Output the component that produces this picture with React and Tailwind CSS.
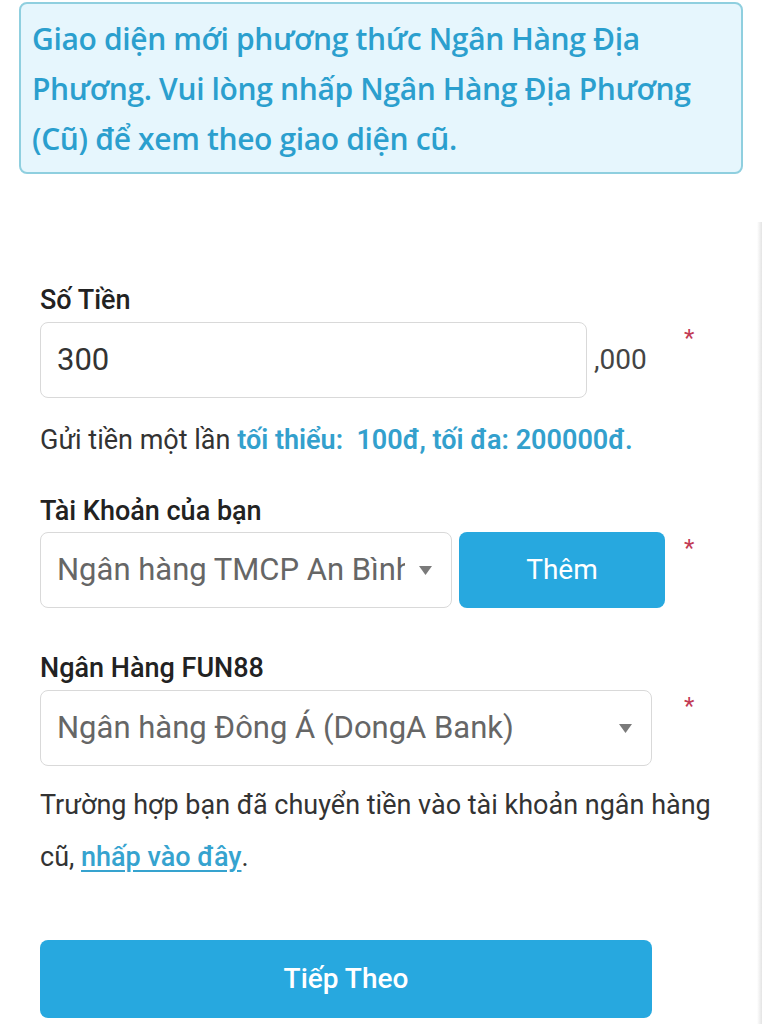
const roboto = { fontFamily: 'Roboto, "Noto Sans", sans-serif' }

function Caret() {
  return (
    <svg width="13" height="9" viewBox="0 0 13 9" className="shrink-0">
      <path d="M0 0 L13 0 L6.5 9 Z" fill="#7a7a7a" />
    </svg>
  )
}

function Star() {
  return <span className="mt-[4px] text-[24px] leading-none text-[#c23a55]">*</span>
}

export default function App() {
  return (
    <div className="relative w-[762px] h-[1024px] overflow-hidden bg-white" style={roboto}>
      {/* right edge shadow */}
      <div className="absolute right-0 top-[222px] h-[802px] w-[5px] bg-gradient-to-r from-white to-[#e4e4e4]" />

      {/* Notice */}
      <div className="mx-[19px] mt-[2px] h-[172px] rounded-[8px] border-2 border-[#8fcfdf] bg-[#e6f6fd] px-[11px] pt-[10px]">
        <p
          className="text-[30px] font-semibold leading-[50px] tracking-[-0.35px] text-[#2b9fce] whitespace-nowrap"
          style={{ fontFamily: '"Open Sans", "Noto Sans", sans-serif' }}
        >
          Giao diện mới phương thức Ngân Hàng Địa
          <br />
          Phương. Vui lòng nhấp Ngân Hàng Địa Phương
          <br />
          (Cũ) để xem theo giao diện cũ.
        </p>
      </div>

      <div className="px-[40px]">
        {/* So tien */}
        <div className="mt-[111px] text-[27px] font-medium leading-[30px] text-[#222]">Số Tiền</div>
        <div className="mt-[7px] flex items-start">
          <div className="flex w-[644px] shrink-0 items-center">
            <div className="flex h-[76px] w-[547px] shrink-0 items-center rounded-[8px] border border-[#d9d9d9] px-[16px] text-[31px] text-[#333]">
              300
            </div>
            <span className="ml-[7px] text-[28px] text-[#444]">,000</span>
          </div>
          <Star />
        </div>
        <div className="mt-[27px] whitespace-nowrap text-[27px] leading-[30px] text-[#333]">
          Gửi tiền một lần <span className="font-semibold text-[#33a0cd]">tối thiểu:&nbsp; 100đ, tối đa: 200000đ.</span>
        </div>

        {/* Tai khoan */}
        <div className="mt-[41px] text-[27px] font-medium leading-[30px] text-[#222]">Tài Khoản của bạn</div>
        <div className="mt-[6px] flex items-start">
          <div className="flex w-[644px] shrink-0">
            <div className="flex h-[76px] w-[412px] shrink-0 items-center rounded-[8px] border border-[#d9d9d9] pl-[16px] pr-[19px]">
              <span className="w-[348px] overflow-hidden whitespace-nowrap text-[31px] text-[#666]">Ngân hàng TMCP An Bình</span>
              <span className="ml-auto"><Caret /></span>
            </div>
            <button className="ml-[7px] flex h-[76px] w-[206px] shrink-0 items-center justify-center rounded-[8px] bg-[#27a8df] text-[28px] text-white">
              Thêm
            </button>
          </div>
          <Star />
        </div>

        {/* Ngan hang FUN88 */}
        <div className="mt-[45px] text-[27px] font-medium leading-[30px] text-[#222]">Ngân Hàng FUN88</div>
        <div className="mt-[7px] flex items-start">
          <div className="w-[644px] shrink-0">
            <div className="flex h-[76px] w-[612px] items-center rounded-[8px] border border-[#d9d9d9] pl-[16px] pr-[19px]">
              <span className="whitespace-nowrap text-[31px] text-[#666]">Ngân hàng Đông Á (DongA Bank)</span>
              <span className="ml-auto"><Caret /></span>
            </div>
          </div>
          <Star />
        </div>

        <p className="mt-[13px] w-[690px] text-[27px] leading-[52px] text-[#333]">
          Trường hợp bạn đã chuyển tiền vào tài khoản ngân hàng
          <br />
          cũ, <a className="font-medium text-[#36a3cf] underline underline-offset-4">nhấp vào đây</a>.
        </p>

        <button className="mt-[57px] flex h-[78px] w-[612px] items-center justify-center rounded-[8px] bg-[#27a8df] text-[28px] font-medium text-white">
          Tiếp Theo
        </button>
      </div>
    </div>
  )
}
